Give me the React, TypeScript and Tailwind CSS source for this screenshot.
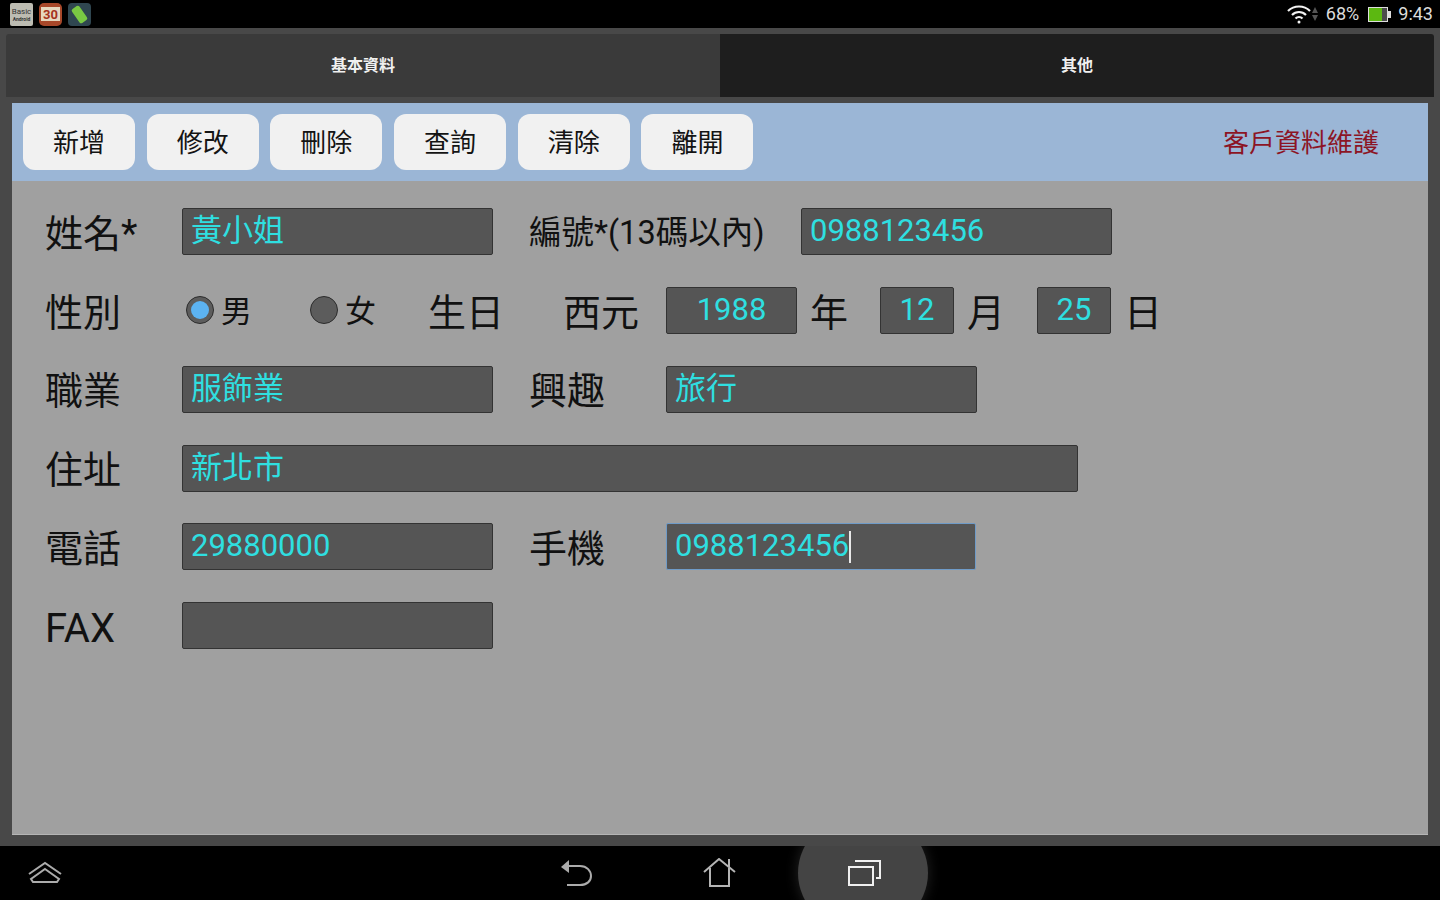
import type { ReactNode } from "react";

const font = "font-['Roboto','Noto_Sans_CJK_TC',sans-serif]";

function Label({ children, className = "", size = "text-[38px]", offset = "mt-[4px]" }: { children: ReactNode; className?: string; size?: string; offset?: string }) {
  return <span className={`leading-none text-[#111] whitespace-nowrap shrink-0 ${offset} ${size} ${className}`}>{children}</span>;
}

function Field({ value, className = "", focused, center }: { value?: string; className?: string; focused?: boolean; center?: boolean }) {
  return (
    <div
      className={`h-[47px] shrink-0 flex items-center rounded-[2px] bg-[#555555] text-[31px] leading-none text-[#2fdfe0] ${
        center ? "justify-center" : "pl-[8px]"
      } ${focused ? "border border-[#6f9bc8]" : "border border-[#333]"} ${className}`}
    >
      <span className="whitespace-nowrap pb-[2px]">{value}</span>
      {focused && <span className="w-[2px] h-[32px] bg-[#e8e8e8]" />}
    </div>
  );
}

function Radio({ checked }: { checked?: boolean }) {
  return (
    <span className="w-[28px] h-[28px] rounded-full bg-[#5c5c5c] border border-[#2c2c2c] flex items-center justify-center shrink-0">
      {checked && <span className="w-[18px] h-[18px] rounded-full bg-[#5cb3f2]" />}
    </span>
  );
}

function NavIcons() {
  return (
    <div className="h-[54px] bg-black relative flex items-center shrink-0 overflow-hidden">
      <svg width="34" height="26" viewBox="0 0 34 26" fill="none" stroke="#ababab" strokeWidth="2" className="ml-[28px] shrink-0">
        <path d="M1 14 17 3l16 11" />
        <path d="M17 9 31 19l-2 3H5l-2-3z" />
      </svg>
      <svg width="32" height="30" viewBox="0 0 32 30" fill="none" stroke="#ababab" strokeWidth="2" className="ml-[498px] shrink-0">
        <path d="M8 8H20C27 8 31 13 31 18C31 23 27 27 20 27H7" />
        <path d="M1 9 9 2V15z" fill="#ababab" stroke="none" />
      </svg>
      <svg width="33" height="31" viewBox="0 0 33 31" fill="none" stroke="#b4b4b4" strokeWidth="2" className="ml-[111px] shrink-0">
        <path d="M1 14 16 1l16 13" />
        <path d="M7 10V28H26V10" />
        <path d="M26 1V9" />
      </svg>
      <div className="absolute left-[798px] -top-[33px] w-[130px] h-[120px] rounded-[50%] bg-[#444444] shadow-[0_0_14px_rgba(255,255,255,0.14)] flex items-center justify-center">
        <svg width="35" height="30" viewBox="0 0 35 30" fill="none" stroke="#f0f0f0" strokeWidth="2" className="ml-[3px]">
          <rect x="2" y="9" width="24" height="18" />
          <path d="M8 3H33V20H29" />
        </svg>
      </div>
    </div>
  );
}

export default function App() {
  const buttons = ["新增", "修改", "刪除", "查詢", "清除", "離開"];
  return (
    <div className={`w-[1440px] h-[900px] flex flex-col overflow-hidden bg-[#484848] ${font}`}>
      {/* status bar */}
      <div className="h-[28px] bg-black flex items-center shrink-0 pl-[10px] pr-[7px]">
        <div className="w-[23px] h-[23px] bg-[#bdbcb2] rounded-[2px] flex flex-col items-center justify-center text-[#333] text-[8px] leading-[9px] overflow-hidden">
          <span>Basic</span>
          <span className="text-[5px] leading-[6px] font-bold">Android</span>
        </div>
        <div className="w-[23px] h-[23px] ml-[6px] bg-[#a8482a] rounded-[5px] flex items-center justify-center">
          <span className="w-[19px] h-[14px] bg-[#e6d8bf] flex items-center justify-center text-[#a5321c] text-[13px] leading-none font-bold">30</span>
        </div>
        <div className="w-[23px] h-[23px] ml-[6px] bg-[#2f4650] rounded-[4px] flex items-center justify-center">
          <span className="w-[9px] h-[17px] bg-[#79c843] rotate-[-35deg] rounded-[2px]" />
        </div>
        <div className="ml-auto flex items-center text-[#dcdcdc] text-[18px] leading-none">
          <svg width="24" height="20" viewBox="0 0 24 20" fill="none" stroke="#f2f2f2" strokeWidth="2.2">
            <path d="M1 7c6-6 16-6 22 0" />
            <path d="M5 11c4-4 10-4 14 0" />
            <path d="M8.500 14.500c2-2 5-2 7 0" />
            <circle cx="12" cy="18" r="1.500" fill="#f2f2f2" stroke="none" />
          </svg>
          <svg width="6" height="16" viewBox="0 0 6 16" fill="#555" className="ml-[1px]">
            <path d="M3 1 6 7H0zM3 15 0 9h6z" />
          </svg>
          <span className="ml-[8px]">68%</span>
          <span className="ml-[9px] w-[20px] h-[15px] bg-[#4c4c4c] border border-[#ddd] flex">
            <span className="w-[13px] bg-[#5cb811]" />
          </span>
          <span className="w-[3px] h-[7px] bg-[#ddd]" />
          <span className="ml-[7px]">9:43</span>
        </div>
      </div>

      {/* tabs */}
      <div className="flex mx-[6px] mt-[6px] h-[63px] shrink-0 text-[16px] font-bold text-[#f0f0f0]">
        <div className="flex-1 bg-[#3a3a3a] rounded-tl-[3px] flex items-center justify-center pt-[1px]">基本資料</div>
        <div className="flex-1 bg-[#1e1e1e] rounded-tr-[3px] flex items-center justify-center pt-[1px]">其他</div>
      </div>

      {/* panel */}
      <div className="flex-1 flex flex-col mx-[12px] mt-[6px] mb-[11px] bg-[#a0a0a0] border-b border-[#b5b5b5]">
        <div className="h-[78px] bg-[#9bb6d6] flex items-center pl-[11px] pr-[49px] shrink-0">
          <div className="flex gap-[11.700px]">
            {buttons.map((b) => (
              <div key={b} className="w-[112px] h-[56px] rounded-[12px] bg-[#f1f1f1] flex items-center justify-center pt-[1px] text-[26px] leading-none text-[#141414]">
                {b}
              </div>
            ))}
          </div>
          <span className="ml-auto pt-[1px] text-[26px] leading-none text-[#8c1424]">客戶資料維護</span>
        </div>

        <div className="flex flex-col gap-[31.850px] pt-[27px] pl-[33px]">
          <div className="flex items-center h-[47px]">
            <Label className="w-[137px]">姓名*</Label>
            <Field value="黃小姐" className="w-[311px]" />
            <Label className="ml-[36px] w-[272px]" size="text-[32.500px]">編號*(13碼以內)</Label>
            <Field value="0988123456" className="w-[311px]" />
          </div>
          <div className="flex items-center h-[47px]">
            <Label className="w-[141px]" offset="mt-[6px]">性別</Label>
            <Radio checked />
            <span className="ml-[7px] w-[89px] mt-[3px] text-[31px] leading-none text-[#111]">男</span>
            <Radio />
            <span className="ml-[7px] w-[83px] mt-[3px] text-[31px] leading-none text-[#111]">女</span>
            <Label className="w-[135px]" offset="mt-[6px]">生日</Label>
            <Label className="w-[103px]" offset="mt-[6px]">西元</Label>
            <Field value="1988" center className="w-[131px]" />
            <Label className="ml-[13px] w-[70px]" offset="mt-[6px]">年</Label>
            <Field value="12" center className="w-[74px]" />
            <Label className="ml-[13px] w-[70px]" offset="mt-[6px]">月</Label>
            <Field value="25" center className="w-[74px]" />
            <Label className="ml-[13px]" offset="mt-[6px]">日</Label>
          </div>
          <div className="flex items-center h-[47px]">
            <Label className="w-[137px]">職業</Label>
            <Field value="服飾業" className="w-[311px]" />
            <Label className="ml-[36px] w-[137px]">興趣</Label>
            <Field value="旅行" className="w-[311px]" />
          </div>
          <div className="flex items-center h-[47px]">
            <Label className="w-[137px]">住址</Label>
            <Field value="新北市" className="w-[896px]" />
          </div>
          <div className="flex items-center h-[47px]">
            <Label className="w-[137px]">電話</Label>
            <Field value="29880000" className="w-[311px]" />
            <Label className="ml-[36px] w-[137px]">手機</Label>
            <Field value="0988123456" focused className="w-[310px]" />
          </div>
          <div className="flex items-center h-[47px]">
            <Label className="w-[137px]" size="text-[40px]" offset="mt-[6px]">FAX</Label>
            <Field className="w-[311px]" />
          </div>
        </div>
      </div>

      <NavIcons />
    </div>
  );
}
